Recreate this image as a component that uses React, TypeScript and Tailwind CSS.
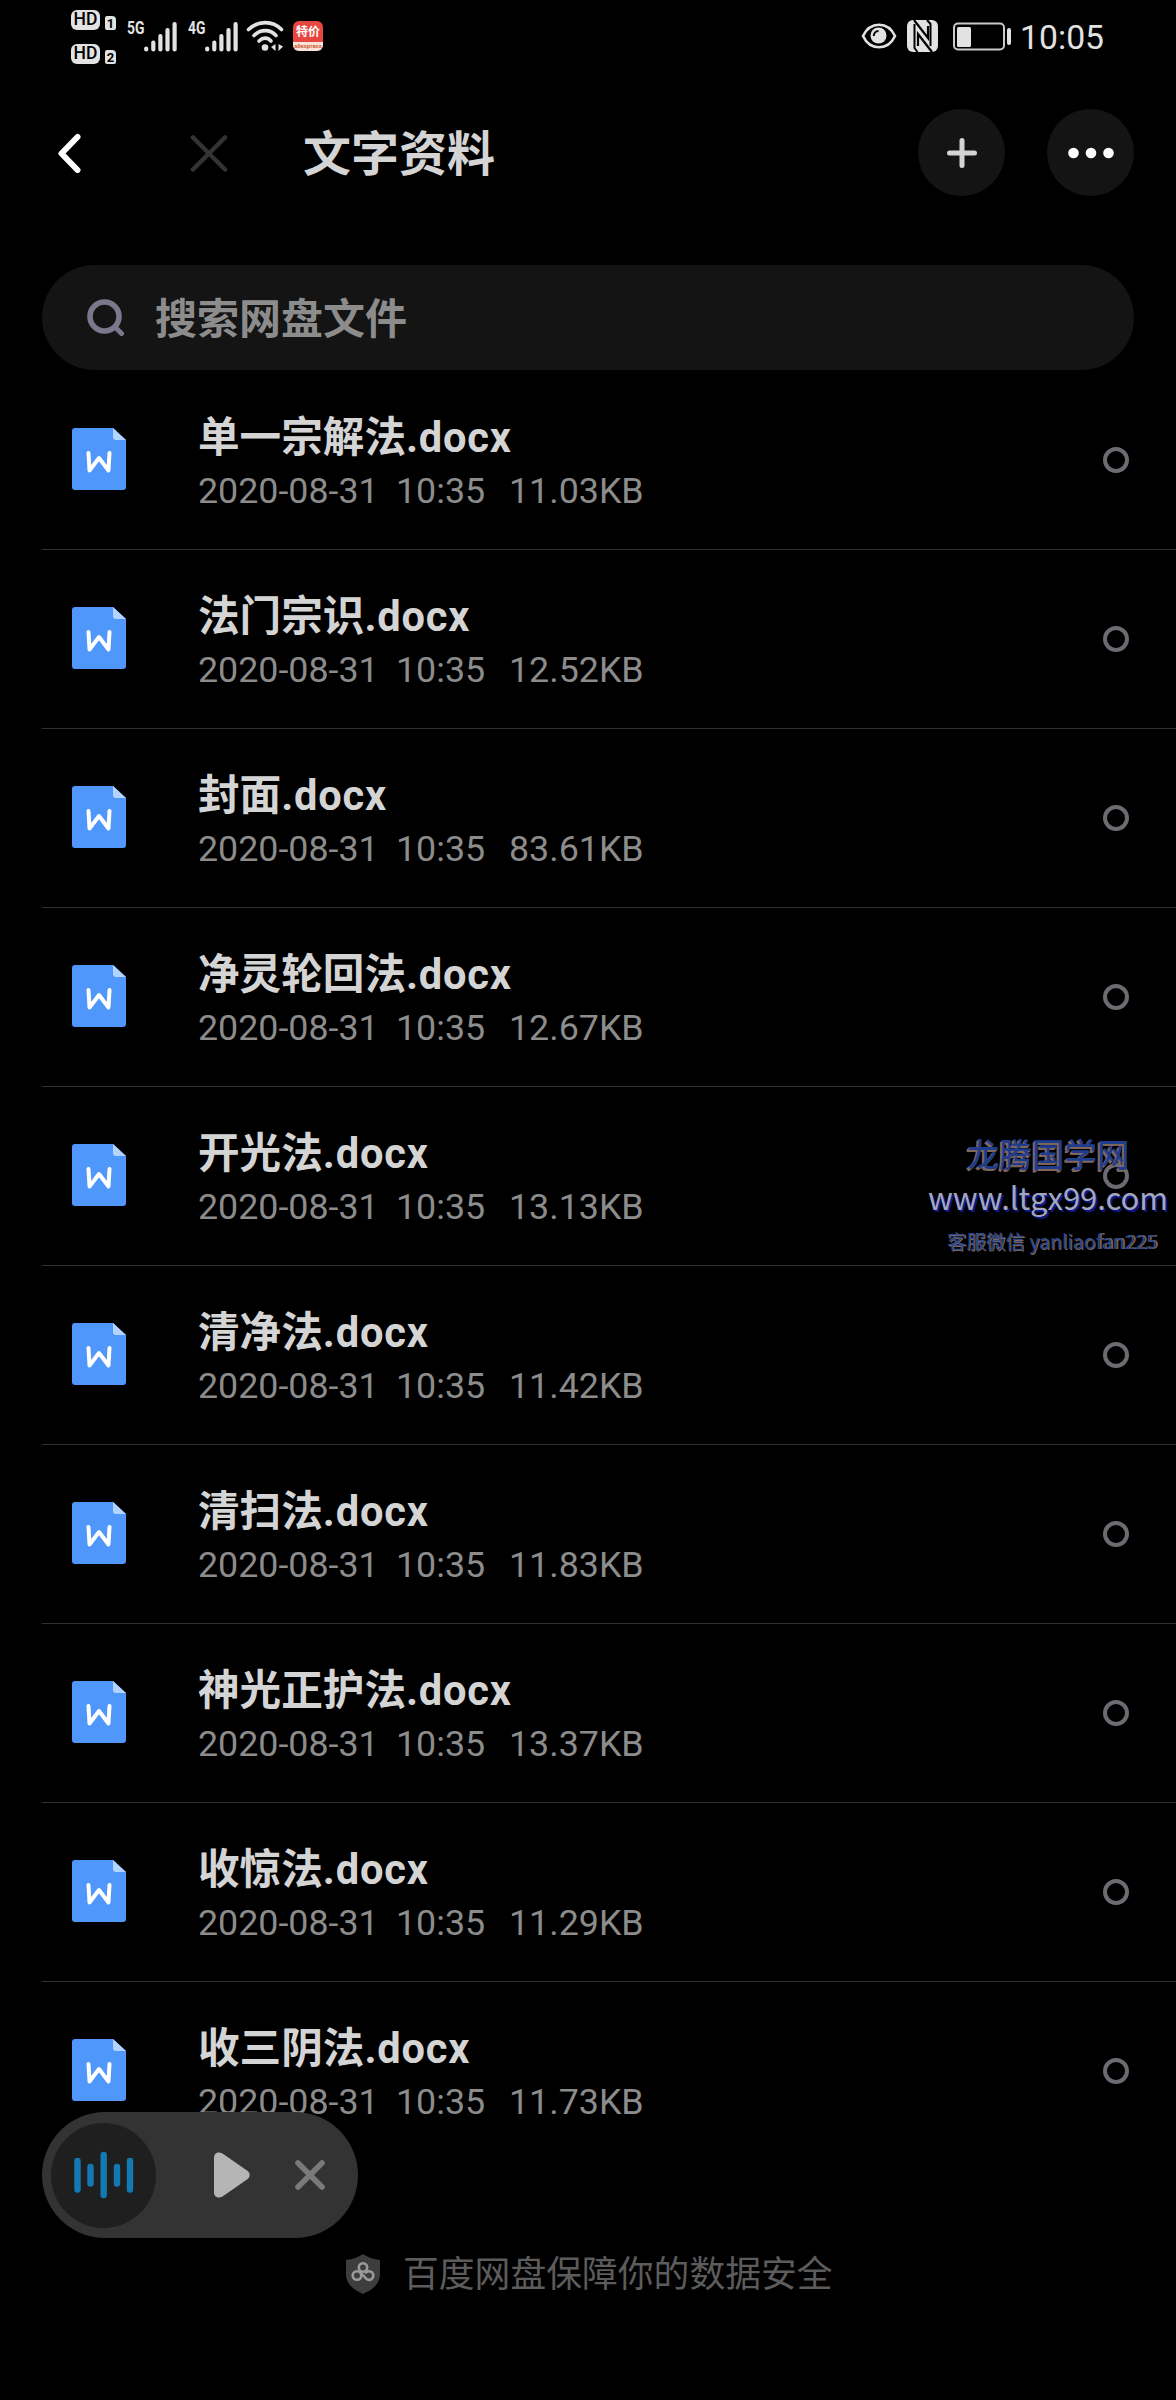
import type { ReactNode } from 'react'

interface DocFile {
    name: string
    size: string
}

const FILES: DocFile[] = [
    { name: '单一宗解法', size: '11.03KB' },
    { name: '法门宗识', size: '12.52KB' },
    { name: '封面', size: '83.61KB' },
    { name: '净灵轮回法', size: '12.67KB' },
    { name: '开光法', size: '13.13KB' },
    { name: '清净法', size: '11.42KB' },
    { name: '清扫法', size: '11.83KB' },
    { name: '神光正护法', size: '13.37KB' },
    { name: '收惊法', size: '11.29KB' },
    { name: '收三阴法', size: '11.73KB' }
]

function HdBadge({ sim }: { sim: string }) {
    return (
        <div className="flex h-[21px] items-end gap-[5px]">
            <span className="flex h-[20px] w-[29px] items-center justify-center rounded-[6px] bg-[#e2e2e2] text-[17.500px] leading-none font-medium text-black">
                HD
            </span>
            <span className="flex h-[14px] w-[11px] items-center justify-center rounded-[2px] rounded-tr-[4px] bg-[#e2e2e2] text-[13px] leading-none font-bold text-black">
                {sim}
            </span>
        </div>
    )
}

function Signal({ label }: { label: string }) {
    return (
        <div className="flex h-[31px] items-start">
            <span className="w-[17px] origin-left scale-x-[0.73] text-[19px] leading-[14px] font-bold text-[#e2e2e2]">{label}</span>
            <svg width="33" height="31" viewBox="0 0 33 31" stroke="#e2e2e2" strokeWidth="4.2" strokeLinecap="round">
                <path d="M2.2 27.6v.8M9.3 21.5v6.9M16.4 15v13.4M23.5 9v19.4M30.6 3v25.4" />
            </svg>
        </div>
    )
}

function StatusBar() {
    return (
        <div className="flex h-[80px] items-start justify-between pr-[72px] pl-[71px]">
            <div className="flex items-start">
                <div className="flex flex-col gap-[13px] pt-[9px]">
                    <HdBadge sim="1" />
                    <HdBadge sim="2" />
                </div>
                <div className="flex pt-[21px] pl-[11px]">
                    <Signal label="5G" />
                    <div className="w-[11px]" />
                    <Signal label="4G" />
                </div>
                <svg className="mt-[20px] ml-[8px]" width="38" height="32" viewBox="0 0 38 32" fill="none" stroke="#e2e2e2" strokeWidth="3.6" strokeLinecap="round">
                    <path d="M2.5 9.5C12 .3 26.500.3 35.500 9.500" />
                    <path d="M8 15.500c6.500-6.500 16-6.500 22 0" />
                    <path d="M13 21c4-3.800 8.500-3.800 12 0" />
                    <circle cx="19" cy="27.500" r="3.300" fill="#e2e2e2" stroke="none" />
                    <path d="M29.500 24v7l-4.500-4zM32.500 31v-7l4.500 2.500z" fill="#e2e2e2" stroke="none" />
                </svg>
                <div className="mt-[21px] ml-[9px] flex h-[30px] w-[30px] flex-col overflow-hidden rounded-[6px] bg-[#e8473f]">
                    <span className="h-[21px] text-center text-[12px] leading-[22px] font-bold whitespace-nowrap text-white">特价</span>
                    <span className="h-[9px] bg-[#f6e4d8] text-center text-[6px] leading-[8px] font-bold text-[#d2603a]">aliexpress</span>
                </div>
            </div>
            <div className="flex items-start text-[#e2e2e2]">
                <svg className="mt-[22px]" width="36" height="28" viewBox="0 0 36 28" fill="none">
                    <path d="M2 14C9-1 27-1 34 14 27 29 9 29 2 14z" stroke="#e2e2e2" strokeWidth="2.600" />
                    <circle cx="17.500" cy="13.500" r="8" fill="#e2e2e2" />
                    <path d="M12.800 14c0-3 2-5 4.700-5" stroke="#000" strokeWidth="2" />
                </svg>
                <svg className="mt-[20px] ml-[9px]" width="33" height="33" viewBox="0 0 33 33">
                    <rect x="1" y="0" width="31" height="32" rx="6" fill="#e2e2e2" />
                    <path d="M8 0l14 18V6M26 32L12 14v12" stroke="#000" strokeWidth="2.200" fill="none" />
                    <path d="M21 0l3.500 4v22" stroke="#000" strokeWidth="2" fill="none" />
                    <path d="M8.500 4v24l3 4" stroke="#000" strokeWidth="2" fill="none" />
                </svg>
                <svg className="mt-[22px] ml-[14px]" width="59" height="29" viewBox="0 0 59 29">
                    <rect x="1" y="1.500" width="50" height="26" rx="4" fill="none" stroke="#c9c9c9" strokeWidth="2" />
                    <rect x="4" y="5" width="14" height="20" rx="1.500" fill="#e2e2e2" />
                    <rect x="54" y="6" width="4" height="17" rx="2" fill="#e2e2e2" />
                </svg>
                <span className="mt-[17px] ml-[8px] text-[33.700px] leading-[42px]">10:05</span>
            </div>
        </div>
    )
}

function RoundButton({ children }: { children: ReactNode }) {
    return <button className="flex size-[87px] items-center justify-center rounded-full bg-[#141414]">{children}</button>
}

function Header() {
    return (
        <header className="flex h-[146px] items-start pr-[42px] pl-[57px]">
            <svg className="mt-[53px]" width="26" height="40" viewBox="0 0 26 40" fill="none" stroke="#fff" strokeWidth="6" strokeLinecap="round" strokeLinejoin="round">
                <path d="M20.500 4L4.500 20.500 20.500 37" />
            </svg>
            <svg className="mt-[53px] ml-[107px]" width="38" height="40" viewBox="0 0 38 40" stroke="#333" strokeWidth="4.500" strokeLinecap="round">
                <path d="M3 4.500l32 32M35 4.500l-32 32" />
            </svg>
            <h1 className="mt-[40px] ml-[75px] flex-1 text-[48px] leading-[70px] font-bold text-[#d4d4d4]">文字资料</h1>
            <div className="mt-[29px] flex gap-[42px]">
                <RoundButton>
                    <svg width="32" height="32" viewBox="0 0 32 32" stroke="#d4d4d4" strokeWidth="5" strokeLinecap="round">
                        <path d="M16 3.500v25M3.500 16h25" />
                    </svg>
                </RoundButton>
                <RoundButton>
                    <svg width="46" height="12" viewBox="0 0 46 12" fill="#fff">
                        <circle cx="5.500" cy="6" r="5.300" />
                        <circle cx="23" cy="6" r="5.300" />
                        <circle cx="40.500" cy="6" r="5.300" />
                    </svg>
                </RoundButton>
            </div>
        </header>
    )
}

function SearchBox() {
    return (
        <div className="mx-[42px] mt-[39px] flex h-[105px] items-center rounded-full bg-[#141414] pl-[45px]">
            <svg width="38" height="38" viewBox="0 0 38 38" fill="none" stroke="#7b778c" strokeLinecap="round">
                <circle cx="17.500" cy="17.500" r="14.500" strokeWidth="5.600" />
                <path d="M29 29l5.500 5.500" strokeWidth="5" />
            </svg>
            <span className="mt-[5px] ml-[30px] text-[42px] leading-[60px] font-bold text-[#8c8c8c]">搜索网盘文件</span>
        </div>
    )
}

function WordIcon() {
    return (
        <svg className="mt-[57px]" width="54" height="62" viewBox="0 0 54 62">
            <path d="M3 0h38l13 12v47a3 3 0 0 1-3 3H3a3 3 0 0 1-3-3V3a3 3 0 0 1 3-3z" fill="#4f97fb" />
            <path d="M41 0l13 12H44a3 3 0 0 1-3-3z" fill="#b3d4ff" />
            <path d="M16.500 25l1 17.500L27 30l9.500 12.500 1-17.500" fill="none" stroke="#fff" strokeWidth="4" strokeLinecap="round" strokeLinejoin="round" />
        </svg>
    )
}

function FileRow({ file, last }: { file: DocFile; last: boolean }) {
    return (
        <li className={`ml-[42px] flex h-[179px] items-start border-b pl-[30px] ${last ? 'border-transparent' : 'border-[#303030]'}`}>
            <WordIcon />
            <div className="mt-[41px] ml-[72px] flex-1">
                <p className="h-[53px] text-[41.600px] leading-[52px] font-bold text-[#d4d4d4]">
                    {file.name}
                    <span className="tracking-[0.8px]">.docx</span>
                </p>
                <p className="flex h-[52px] text-[35.800px] leading-[53px] text-[#8c8c8c]">
                    <span className="w-[198px]">2020-08-31</span>
                    <span className="w-[113px]">10:35</span>
                    <span>{file.size}</span>
                </p>
            </div>
            <span className="mt-[76px] mr-[47px] size-[26px] rounded-full border-4 border-[#6c6b71]" />
        </li>
    )
}

function MiniPlayer() {
    return (
        <div className="absolute top-[2112px] left-[42px] flex h-[126px] w-[316px] items-center rounded-full bg-[#333] pl-[9px]">
            <div className="flex size-[105px] items-center justify-center rounded-full bg-[#1f1f1f]">
                <svg width="60" height="48" viewBox="0 0 60 48" stroke="#1479b3" strokeWidth="6.400" strokeLinecap="round">
                    <path d="M3.500 10v28.500M16.500 16v16.500M29.700 4v40M43 16v16.500M56 10v28.500" />
                </svg>
            </div>
            <svg className="ml-[58px]" width="36" height="46" viewBox="0 0 36 46" fill="#b5b5b5">
                <path d="M0 5.500C0 1 4.500-1 8.500 1.500L33 18.500c3.500 2.500 3.500 6.500 0 9L8.500 44.500C4.500 47 0 45 0 40.500z" />
            </svg>
            <svg className="ml-[44px]" width="32" height="32" viewBox="0 0 32 32" stroke="#7a7a7a" strokeWidth="5.600" strokeLinecap="round">
                <path d="M4 4l24 24M28 4L4 28" />
            </svg>
        </div>
    )
}

function Watermark() {
    return (
        <div className="absolute top-[1130px] left-[928px] w-[248px] font-['Noto_Sans_CJK_SC',sans-serif]">
            <p className="pl-[39px] text-[32.500px] leading-[46px] font-medium whitespace-nowrap text-[#1f3d8c] [text-shadow:-2px_2px_0_#80655a,-1px_1px_0_#80655a]">龙腾国学网</p>
            <p className="text-[31px] leading-[42px] whitespace-nowrap text-[#a3a7bd] [text-shadow:2px_2px_0_#0c168c]">www.ltgx99.com</p>
            <p className="pl-[19px] text-[19.500px] leading-[46px] whitespace-nowrap text-[#2b4a8c] [text-shadow:1px_1px_0_#80655a]">
                客服微信 yanliao<span className="[text-shadow:2px_0_0_#80655a]">fan225</span>
            </p>
        </div>
    )
}

function Footer() {
    return (
        <footer className="mt-[92px] flex h-[42px] items-center pl-[346px]">
            <svg width="34" height="40" viewBox="0 0 34 40" fill="none">
                <path d="M17 0c5 3.500 10 5 17 6v14c0 10-8 16-17 20C8 36 0 30 0 20V6c7-1 12-2.500 17-6z" fill="#3d3d3d" />
                <g stroke="#9a9a9a" strokeWidth="2.600">
                    <circle cx="17" cy="13.500" r="4.200" />
                    <circle cx="11" cy="21.500" r="4.300" />
                    <path d="M14.500 18.500l5 5.500a4.300 4.300 0 1 0 .5-5.500" strokeLinecap="round" />
                </g>
            </svg>
            <span className="mt-[2px] ml-[23px] text-[35.800px] leading-[42px] text-[#5c5c5c]">百度网盘保障你的数据安全</span>
        </footer>
    )
}

export default function App() {
    return (
        <div className="relative h-[2400px] w-[1176px] overflow-hidden bg-black font-[Roboto,'Noto_Sans_CJK_SC',sans-serif]">
            <StatusBar />
            <Header />
            <SearchBox />
            <ul className="mt-px">
                {FILES.map((file, i) => (
                    <FileRow key={file.name} file={file} last={i === FILES.length - 1} />
                ))}
            </ul>
            <Footer />
            <MiniPlayer />
            <Watermark />
        </div>
    )
}
